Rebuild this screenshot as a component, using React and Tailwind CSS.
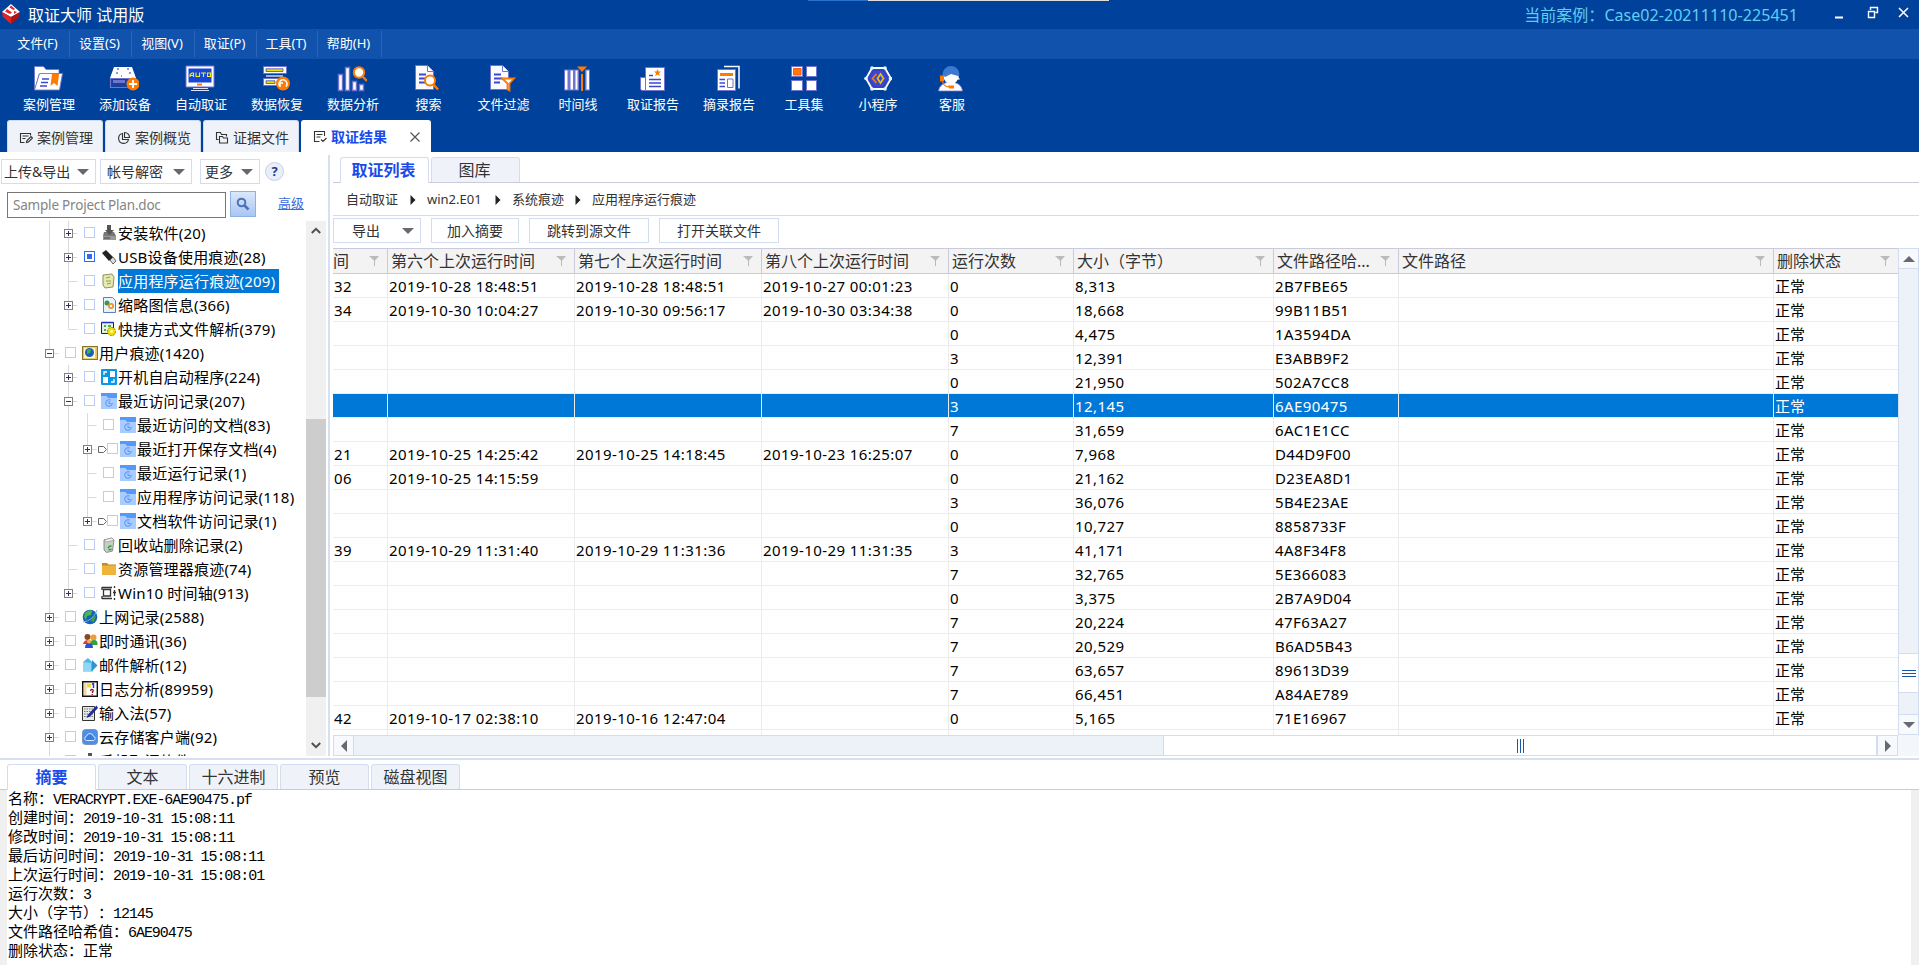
import React from "react";

const UI = "font-['Noto_Sans','Noto_Sans_CJK_SC',sans-serif]";

function Tri({ dir = "down", size = 12, color = "#666a70" }) {
  const d = { down: "M0 3h12l-6 6z", up: "M0 9h12l-6-6z", right: "M3 0v12l6-6z", left: "M9 0v12l-6-6z" }[dir];
  return (
    <svg width={size} height={size} viewBox="0 0 12 12" className="shrink-0">
      <path d={d} fill={color} />
    </svg>
  );
}

/* ---------- toolbar icons, drawn on a 30x27 grid ---------- */
const L = "#6f74cf";
const B = "#3a49cf";
const O = "#ff7a00";
const DocPage = () => (
  <>
    <path d="M3.500.5h12l6 6v18h-18z" fill="#fafaff" stroke={L} />
    <path d="M15.500.5v6h6" fill="#fff" stroke={L} />
    <path d="M7 9.500h7M7 13.500h9M7 17.500h6" stroke={B} strokeWidth="1.800" />
  </>
);
const toolIcons = {
  cases: (
    <>
      <path d="M1.500 1.500h9l2.500 3h13v5H6l-4 15h-.5z" fill="#fff" stroke={L} strokeWidth=".8" />
      <path d="M6.500 8.500h23l-3 16.500H1.500z" fill="#fff" stroke={L} strokeWidth=".9" />
      <path d="M9 14h7M8 17.500h7M7 21h7" stroke={B} strokeWidth="1.600" />
      <path d="M19 9h7l-1.500 12-3.500-3-3.500 3z" fill={O} />
    </>
  ),
  device: (
    <>
      <path d="M5 2h18l4 11H1z" fill="#fff" />
      <path d="M8 4h2M18 4h2M7 8h2M20 8h2M12 11h1" stroke={L} strokeWidth="1.600" />
      <path d="M1.500 13.500h25v9h-25z" fill="#1b3f9c" stroke={L} strokeWidth="1.200" />
      <path d="M4 15h12v3H4z" fill={L} />
      <circle cx="24" cy="19" r="6.500" fill={O} />
      <path d="M24 15v8M20 19h8" stroke="#fff" strokeWidth="1.800" />
    </>
  ),
  auto: (
    <>
      <path d="M1 1h28v21H1z" fill="#fff" stroke={L} strokeWidth="1" />
      <path d="M3.500 3.500h23v14h-23z" fill="#1746d6" />
      <path d="M5 12V9.500l2-1.500h1.500v4M5 10.500h3.500M11 7.500v4h3.500v-4M16 8h5M18.500 8v4M22.500 8h3v3.500h-3z" fill="none" stroke="#ffef00" strokeWidth="1.100" />
      <path d="M12 18.500h5v2h-5z" fill={O} />
      <path d="M8 23.500h15M6 25.500h18" stroke="#dfe3ff" strokeWidth="1" />
    </>
  ),
  recover: (
    <>
      <path d="M2.500 1.500h23v7h-23zM2.500 13.500h23v7h-23z" fill="#fff" stroke={L} />
      <path d="M5 3.800h17v2.700H5z" fill="#e8e000" stroke={B} strokeWidth=".8" />
      <path d="M5 15.800h9v2.700H5z" fill="#e8e000" stroke={B} strokeWidth=".8" />
      <path d="M5 11h17" stroke="#fff" strokeWidth="1.200" />
      <circle cx="22" cy="18.500" r="7" fill={O} />
      <path d="M19 21.500a4 4 0 1 1 6 0M19 22v-4M19 18h3" fill="none" stroke="#fff" strokeWidth="1.600" />
    </>
  ),
  analyze: (
    <>
      <path d="M1.500 9.500h4v16h-4zM8.500 2.500h4v23h-4zM15.500 16.500h4v9h-4zM22.500 19.500h4v6h-4z" fill="#fff" stroke={L} strokeWidth="1.400" />
      <path d="M25 11l5 5" stroke={O} strokeWidth="2.400" />
      <circle cx="22" cy="7.500" r="5.200" fill="#fff" stroke={O} strokeWidth="2" />
    </>
  ),
  search: (
    <>
      <DocPage />
      <path d="M21 19l5 5.500" stroke={O} strokeWidth="2.600" />
      <circle cx="18" cy="15.500" r="5" fill="#fff" stroke={O} strokeWidth="2" />
    </>
  ),
  filter: (
    <>
      <DocPage />
      <path d="M15 13.500h12l-4.500 5v7l-2-1v-6z" fill="#fff" stroke={O} strokeWidth="1.800" />
    </>
  ),
  timeline: (
    <>
      <path d="M2 4.500h26v21H2z" fill={L} />
      <path d="M3 5.500h2.500v19H3zM8.500 5.500h2.500v19H8.500zM13.500 5.500h2v19h-2zM24.500 5.500h2.500v19h-2.500z" fill="#fff" />
      <path d="M17 4h6v22h-6z" fill="#00429b" />
      <path d="M19 9h2v17h-2z" fill={O} />
      <path d="M15 1.500h10l-5 5.500z" fill={O} />
    </>
  ),
  report: (
    <>
      <path d="M3.500 12.500h6v13h-4q-2 0-2-2z" fill="#fff" stroke={L} />
      <path d="M8.500 2.500h19v23h-19z" fill="#fff" stroke={L} />
      <path d="M12 10.500h4M12 14.500h12M12 18h12M12 21.500h12" stroke={B} strokeWidth="1.700" />
      <path d="M20.500 4l1 2.500h2.500l-2 1.800.8 2.700-2.300-1.500-2.300 1.500.8-2.700-2-1.800h2.500z" fill={O} />
    </>
  ),
  excerpt: (
    <>
      <path d="M11 1.500h15v22" fill="none" stroke="#fff" strokeWidth="1.500" />
      <path d="M4.500 4.500h18v21h-18z" fill="#fff" stroke={L} />
      <path d="M7 8h13v3H7z" fill={O} />
      <path d="M6.500 14.500h5.500M6.500 18h5.500M6.500 21.500h5.500" stroke={B} strokeWidth="1.700" />
      <path d="M14.500 14h5.500v8.500h-5.500z" fill="#fff" stroke={L} />
    </>
  ),
  tools: (
    <>
      <path d="M3.500 1.500h11v10h-11zM18.500 1.500h10v10h-10zM3.500 15.500h11v10h-11zM18.500 15.500h10v10h-10z" fill="#fff" stroke={L} />
      <path d="M5.500 3.500h7.500v6.500H5.500z" fill={O} stroke="#ff5a1e" />
    </>
  ),
  mini: (
    <>
      <path d="M10 3h13l6 10.500L23 24H10L4 13.500z" fill={B} stroke="#fff" strokeWidth="1.800" />
      <path d="M12 5h9l5 8.500-5 8.500h-9l-5-8.500z" fill={B} stroke="#2a35a0" strokeWidth=".6" />
      <circle cx="10" cy="3" r="1.800" fill="#d8fbff" /><circle cx="23" cy="3" r="1.800" fill="#d8fbff" />
      <circle cx="28.500" cy="13.500" r="1.800" fill="#d8fbff" /><circle cx="4" cy="13.500" r="1.800" fill="#d8fbff" />
      <circle cx="10" cy="24" r="1.800" fill="#d8fbff" /><circle cx="23" cy="24" r="1.800" fill="#d8fbff" />
      <path d="M14.500 9l-4 4.500 4 4.500" fill="none" stroke={O} strokeWidth="1.600" />
      <path d="M18.500 9l3 4.500-3 4.500-3-4.500z" fill="none" stroke="#f5c400" strokeWidth="1.600" />
    </>
  ),
  service: (
    <>
      <path d="M2.500 26c1-6 5-7.500 8-8.500h8c4 1 7 3 8 8.500z" fill="#fff" stroke={L} strokeWidth=".8" />
      <circle cx="15" cy="11.500" r="7.500" fill="#fff" />
      <path d="M6.500 9.500a8.500 8.500 0 0 1 17 0l-1.500 1.500-7-2-6 3z" fill="#3b7ad0" />
      <path d="M22 11.500l2 3h-3z" fill="#fff" />
      <path d="M4 10.500h4v6H4z" fill={O} />
      <path d="M6.500 16.500q1 5 6.500 5.500" fill="none" stroke={O} strokeWidth="1.200" />
      <path d="M12 20.500h6v3h-5z" fill={O} />
    </>
  ),
};

const tools = [
  ["cases", "案例管理", "w-[76px]"],
  ["device", "添加设备", "w-[76px]"],
  ["auto", "自动取证", "w-[76px]"],
  ["recover", "数据恢复", "w-[76px]"],
  ["analyze", "数据分析", "w-[76px]"],
  ["search", "搜索", "w-[75px]"],
  ["filter", "文件过滤", "w-[75px]"],
  ["timeline", "时间线", "w-[74px]"],
  ["report", "取证报告", "w-[76px]"],
  ["excerpt", "摘录报告", "w-[76px]"],
  ["tools", "工具集", "w-[74px]"],
  ["mini", "小程序", "w-[74px]"],
  ["service", "客服", "w-[74px]"],
];

const menus = [
  ["文件(F)", "w-[62px]"],
  ["设置(S)", "w-[62px]"],
  ["视图(V)", "w-[63px]"],
  ["取证(P)", "w-[62px]"],
  ["工具(T)", "w-[61px]"],
  ["帮助(H)", "w-[64px]"],
];

const tabIcons = {
  edit: "M11.500 4.500v-2h-10v9h4M3.500 5h6M3.500 7.500h3M7.500 11.500l.5-2 4-4 1.500 1.500-4 4z",
  pie: "M5.500 2.500a5 5 0 1 0 6 6h-6zM7.500 1.500v5h5a5 5 0 0 0-5-5z",
  folder: "M3.500 8.500h-2v-7h4l1 2h5v2M4.500 5.500h3l1 1.500h4v5h-8z",
  result: "M11.500 6v-4.500h-10v10h5M3.500 4.500h6M3.500 7h4M8 9.500l2 2 3.500-3.500",
};

function DocTab({ icon, label, active, cls }) {
  return (
    <div className={`flex h-[32px] items-center rounded-t-[3px] border-x border-t pl-[11px] ${cls} ${active ? "border-white bg-white" : "border-[#cfdcee] bg-[#eff3f9] pt-[2px]"}`}>
      <svg width="14" height="14" viewBox="0 0 14 14" fill="none" stroke="#333" strokeWidth="1.100">
        <path d={tabIcons[icon]} />
      </svg>
      <span className={`ml-[4px] text-[14px] leading-[20px] ${active ? "font-bold text-[#1a4be8]" : "text-[#333]"}`}>{label}</span>
      {active && (
        <svg width="10" height="10" viewBox="0 0 10 10" className="ml-[23px]" stroke="#555" strokeWidth="1.200">
          <path d="M.5.5l9 9M9.500.5l-9 9" />
        </svg>
      )}
    </div>
  );
}

/* ---------- tree icons, drawn on a 16x16 grid ---------- */
const treeIcons = {
  install: (
    <>
      <path d="M3 7h10l2 4v4H2v-4z" fill="#777" /><path d="M2 11h13v4H2z" fill="#999" /><path d="M3 13h6" stroke="#444" />
      <path d="M6 0h4v5h3l-4.500 5L4 5h2z" fill="#555" />
    </>
  ),
  usb: (
    <>
      <path d="M1 4l4-3 7 7-4 4z" fill="#222" /><path d="M9 11l3-3 3 4-3 3z" fill="#ddd" stroke="#444" strokeWidth=".8" />
    </>
  ),
  app: (
    <>
      <path d="M2 2l9-1 2 3-1 10-8 1-2-3z" fill="#e4eab0" stroke="#777a40" strokeWidth=".8" />
      <path d="M5 5l4-1M5 8h5M6 11l4-1" stroke="#8fa050" />
    </>
  ),
  thumb: (
    <>
      <path d="M2.500.5h9l3 3v12h-12z" fill="#e8f1ff" stroke="#5b7fc0" /><circle cx="6" cy="6" r="2.500" fill="#3c9a3c" /><circle cx="10" cy="9" r="3" fill="#e8962a" /><circle cx="10" cy="9" r="1.200" fill="#fff" />
    </>
  ),
  shortcut: (
    <>
      <path d="M.5 1.500h12v11H.5z" fill="#e7f2e7" stroke="#223" /><path d="M.5 1.500h12" stroke="#2233bb" strokeWidth="1.500" /><path d="M3 5h2M3 9h2M7 5h3" stroke="#179a17" strokeWidth="1.500" />
      <circle cx="10.500" cy="10.500" r="4" fill="#f5e100" stroke="#8c7a00" strokeDasharray="2 1" /><circle cx="10.500" cy="10.500" r="1.300" fill="#fff" />
    </>
  ),
  user: (
    <>
      <path d="M.5 1.500h15v13H.5z" fill="#e8cf70" stroke="#8f7420" strokeWidth="1.200" /><path d="M2 3h11v10H2z" fill="#fff7c8" />
      <circle cx="7.500" cy="7.500" r="4.500" fill="#1c5fb8" /><path d="M5 5q3-2 4 0l-1 3-3 1z" fill="#43b04a" />
    </>
  ),
  boot: (
    <>
      <rect width="16" height="16" rx="1" fill="#0a97e6" /><path d="M2 8h5v6H2zM9 2h5v6H9z" fill="#fff" /><path d="M3 6V3h3M13 10v3h-3" fill="none" stroke="#fff" strokeWidth="1.300" />
    </>
  ),
  recent: (
    <>
      <path d="M0 0h16v16H0z" fill="#a9ccff" /><path d="M0 0h16v5H7L5.500 3H0z" fill="#5598fb" /><circle cx="8" cy="10" r="3.300" fill="none" stroke="#5595f0" strokeDasharray="17 3" /><path d="M8 8v2.500h2" fill="none" stroke="#5595f0" />
    </>
  ),
  bin: (
    <>
      <path d="M3 3l8-2 2 2-1.500 11-6 1.500L3 13z" fill="#c4cfc4" stroke="#777" strokeWidth=".8" /><path d="M3 3l8-2 2 2-7 2z" fill="#f5f5ee" stroke="#888" strokeWidth=".6" /><path d="M7 11q2-3 3.500-1.500M7.500 12.500h3" fill="none" stroke="#2e9a2e" strokeWidth="1.400" />
    </>
  ),
  folder: (
    <>
      <path d="M1 2h5l1.500 1.500H15V14H1z" fill="#c98a1e" /><path d="M1 4.500h14V14H1z" fill="#efb43c" />
    </>
  ),
  axis: <path d="M1 2.500h10M1 13.500h10M2.500 4.500h7v6.500h-7zM1 2v3M1 11v3M13.500 1v2M13.500 5v6M13.500 13v2M12 7.500h3" fill="none" stroke="#333" strokeWidth="1.300" />,
  globe: (
    <>
      <circle cx="8" cy="8" r="7.300" fill="#1763b5" /><path d="M3 4q4-4 7-2l-1 4-4 1-1 4-2-3z" fill="#4cb84c" /><path d="M10 8l4-1-2 6-3-1z" fill="#3da04a" /><path d="M1 13Q11 12 15 1" fill="none" stroke="#6ab6f0" />
    </>
  ),
  im: (
    <>
      <circle cx="5.500" cy="4" r="3" fill="#8a4a20" /><circle cx="11.500" cy="4.500" r="3" fill="#f59a30" /><path d="M1 11q1-4 5-4t5 4z" fill="#d8432a" /><path d="M7 12q1-5 5-5t3.500 5z" fill="#3aa03a" /><path d="M3 15q0-5 4-5t4 5z" fill="#2a50d8" /><circle cx="7" cy="8.500" r="2" fill="#f0b060" />
    </>
  ),
  mail: (
    <>
      <path d="M1 5l5-4 4 4h1l4 3.500-4 4v2H1z" fill="#4fb8e8" /><path d="M1 5l8 1v8H1z" fill="#8ed8f5" /><path d="M10 3l5.500 5.500L10 14z" fill="#2f93cc" />
    </>
  ),
  log: (
    <>
      <path d="M.7.7h14.600v14.600H.7z" fill="#fff" stroke="#111" strokeWidth="1.400" /><path d="M2 2h2.500v12H2z" fill="#e8dca0" /><path d="M6 2.500v4M8 2.500v4" stroke="#e0d000" strokeWidth="1.500" /><path d="M11.500 2v5M10 3.500l1.500-1.500" stroke="#2233dd" strokeWidth="1.400" /><path d="M8.500 10q.5-2 2-1.500t0 2.500v1M10.200 13v1" fill="none" stroke="#8a1020" strokeWidth="1.300" />
    </>
  ),
  ime: (
    <>
      <path d="M.5 1.500h12v14H.5z" fill="#e8e8e8" stroke="#333" /><path d="M2 4h9M2 6.500h9M2 9h9M2 11.500h9" stroke="#777" strokeDasharray="1.500 1" /><path d="M14.500.5L6 9.500 4.500 13 8 11.500 16 3z" fill="#1d2f9c" />
    </>
  ),
  cloud: (
    <>
      <rect x=".5" y=".5" width="15" height="15" rx="3" fill="#4d8fe8" stroke="#7a93bd" /><path d="M4.500 11.500a2.200 2.200 0 0 1 0-4.300 3.500 3.500 0 0 1 6.800 0 2.200 2.200 0 0 1 .2 4.300z" fill="#3a7be0" stroke="#dceaff" />
    </>
  ),
};

/* [level, expander, icon, label, options] */
const tree = [
  ["B", "+", "install", "安装软件(20)"],
  ["B", "+", "usb", "USB设备使用痕迹(28)", { partial: true }],
  ["B", "", "app", "应用程序运行痕迹(209)", { selected: true }],
  ["B", "+", "thumb", "缩略图信息(366)"],
  ["B", "", "shortcut", "快捷方式文件解析(379)", { last: true }],
  ["A", "-", "user", "用户痕迹(1420)"],
  ["B", "+", "boot", "开机自启动程序(224)"],
  ["B", "-", "recent", "最近访问记录(207)"],
  ["C", "", "recent", "最近访问的文档(83)"],
  ["C", "+", "recent", "最近打开保存文档(4)", { flag: true }],
  ["C", "", "recent", "最近运行记录(1)"],
  ["C", "", "recent", "应用程序访问记录(118)"],
  ["C", "+", "recent", "文档软件访问记录(1)", { flag: true, last: true }],
  ["B", "", "bin", "回收站删除记录(2)"],
  ["B", "", "folder", "资源管理器痕迹(74)"],
  ["B", "+", "axis", "Win10 时间轴(913)", { last: true }],
  ["A", "+", "globe", "上网记录(2588)"],
  ["A", "+", "im", "即时通讯(36)"],
  ["A", "+", "mail", "邮件解析(12)"],
  ["A", "+", "log", "日志分析(89959)"],
  ["A", "+", "ime", "输入法(57)"],
  ["A", "+", "cloud", "云存储客户端(92)"],
  ["A", "+", "install", "手机取证软件(2)"],
];

function Guide({ kind, exp, last }) {
  return (
    <svg width="19" height="24" viewBox="0 0 19 24" className="shrink-0" fill="none">
      <path d={last ? "M9.500 0v12.500" : "M9.500 0v24"} stroke="#dadada" />
      {kind === "node" && <path d="M9.500 12.500h9" stroke="#dadada" />}
      {exp && (
        <>
          <rect x="5.500" y="8.500" width="8" height="8" fill="#fff" stroke="#808080" />
          <path d={exp === "+" ? "M7 12.500h5M9.500 10v5" : "M7 12.500h5"} stroke="#26346b" />
        </>
      )}
    </svg>
  );
}

function TreeRow({ row }) {
  const [level, exp, icon, label, o = {}] = row;
  return (
    <div className="flex h-[24px] shrink-0 items-center pl-[40px]">
      {level !== "A" && <Guide kind="line" />}
      {level === "C" && <Guide kind="line" />}
      <Guide kind="node" exp={exp} last={o.last} />
      {o.flag ? (
        <svg width="9" height="9" viewBox="0 0 9 9" className="ml-[1px] shrink-0" fill="none" stroke="#666"><path d="M.5 1.500h5l3 3-3 3h-5z" /></svg>
      ) : (
        <span className="w-[6px] shrink-0" />
      )}
      <span className={`mt-[-1px] flex size-[11px] shrink-0 items-center justify-center border ${o.partial ? "border-[#2f6bea] bg-white" : "border-[#b9cdf5] bg-white"}`}>
        {o.partial && <span className="size-[5px] bg-[#2f6bea]" />}
      </span>
      <svg width="16" height="16" viewBox="0 0 16 16" className={`mt-[-1px] shrink-0 ${o.flag ? "ml-[2px]" : "ml-[6px]"}`}>{treeIcons[icon]}</svg>
      <span className={`ml-[1px] h-[24px] whitespace-nowrap pr-[4px] text-[15px] leading-[24px] tracking-[0.2px] ${o.selected ? "bg-[#0078d7] text-white" : "text-black"}`}>{label}</span>
    </div>
  );
}

/* ---------- results table ---------- */
const cols = [
  ["间", "w-[55px]"],
  ["第六个上次运行时间", "w-[187px]"],
  ["第七个上次运行时间", "w-[187px]"],
  ["第八个上次运行时间", "w-[187px]"],
  ["运行次数", "w-[125px]"],
  ["大小（字节）", "w-[200px]"],
  ["文件路径哈...", "w-[125px]"],
  ["文件路径", "w-[375px]"],
  ["删除状态", "w-[124px]"],
];
const rows = [
  ["32", "2019-10-28 18:48:51", "2019-10-28 18:48:51", "2019-10-27 00:01:23", "0", "8,313", "2B7FBE65"],
  ["34", "2019-10-30 10:04:27", "2019-10-30 09:56:17", "2019-10-30 03:34:38", "0", "18,668", "99B11B51"],
  ["", "", "", "", "0", "4,475", "1A3594DA"],
  ["", "", "", "", "3", "12,391", "E3ABB9F2"],
  ["", "", "", "", "0", "21,950", "502A7CC8"],
  ["", "", "", "", "3", "12,145", "6AE90475"],
  ["", "", "", "", "7", "31,659", "6AC1E1CC"],
  ["21", "2019-10-25 14:25:42", "2019-10-25 14:18:45", "2019-10-23 16:25:07", "0", "7,968", "D44D9F00"],
  ["06", "2019-10-25 14:15:59", "", "", "0", "21,162", "D23EA8D1"],
  ["", "", "", "", "3", "36,076", "5B4E23AE"],
  ["", "", "", "", "0", "10,727", "8858733F"],
  ["39", "2019-10-29 11:31:40", "2019-10-29 11:31:36", "2019-10-29 11:31:35", "3", "41,171", "4A8F34F8"],
  ["", "", "", "", "7", "32,765", "5E366083"],
  ["", "", "", "", "0", "3,375", "2B7A9D04"],
  ["", "", "", "", "7", "20,224", "47F63A27"],
  ["", "", "", "", "7", "20,529", "B6AD5B43"],
  ["", "", "", "", "7", "63,657", "89613D39"],
  ["", "", "", "", "7", "66,451", "A84AE789"],
  ["42", "2019-10-17 02:38:10", "2019-10-16 12:47:04", "", "0", "5,165", "71E16967"],
];

function Table() {
  return (
    <div className="flex h-[487px] w-[1565px] flex-col overflow-hidden">
      <div className="flex h-[26px] shrink-0 border-y border-[#c9cadb] bg-[#f3f3f3]">
        {cols.map(([name, w], i) => (
          <div key={i} className={`flex shrink-0 items-center justify-between overflow-hidden pr-[8px] ${w} ${i === 8 ? "" : "border-r border-[#c9cadb]"} ${i === 0 ? "" : "pl-[3px]"}`}>
            <span className="whitespace-nowrap text-[16px] leading-[24px] text-[#333]">{name}</span>
            <svg width="10" height="10" viewBox="0 0 10 10" className="mt-[-1px] shrink-0"><path d="M0 0h10L6 4.500V10H5V4.500z" fill="#bbb" /></svg>
          </div>
        ))}
      </div>
      {[...rows, null].map((r, ri) => {
        const sel = ri === 5;
        return (
          <div key={ri} className={`flex h-[24px] shrink-0 border-b border-[#ececec] ${sel ? "bg-[#0078d7] text-white" : "bg-white text-black"}`}>
            {cols.map(([, w], i) => (
              <div key={i} className={`shrink-0 whitespace-nowrap text-[15px] leading-[24px] ${i < 8 ? "tracking-[0.42px]" : ""} ${w} ${i === 8 ? "" : "border-r border-[#ececec]"} pl-[1px]`}>
                {r ? (i < 7 ? r[i] : i === 8 ? "正常" : "") : ""}
              </div>
            ))}
          </div>
        );
      })}
    </div>
  );
}

const Btn = ({ cls, children }) => (
  <div className={`flex items-center border border-[#d3ddef] bg-white text-[14px] leading-[20px] text-[#333] ${cls}`}>{children}</div>
);

const summary = [
  ["名称：", "VERACRYPT.EXE-6AE90475.pf"],
  ["创建时间：", "2019-10-31 15:08:11"],
  ["修改时间：", "2019-10-31 15:08:11"],
  ["最后访问时间：", "2019-10-31 15:08:11"],
  ["上次运行时间：", "2019-10-31 15:08:01"],
  ["运行次数：", "3"],
  ["大小（字节）：", "12145"],
  ["文件路径哈希值：", "6AE90475"],
  ["删除状态：", "正常"],
];

export default function App() {
  return (
    <div className={`flex h-[965px] w-[1919px] flex-col overflow-hidden bg-white [text-spacing-trim:space-all] ${UI}`}>
      {/* title bar */}
      <header className="relative flex h-[29px] shrink-0 items-center bg-[#00429b]">
        <div className="absolute left-[808px] top-0 flex h-[1px]">
          <div className="w-[60px] bg-[#2a72cf]" />
          <div className="w-[241px] bg-[#dcdcdc]" />
        </div>
        <svg width="18" height="20" viewBox="0 0 18 20" className="ml-[2px] mt-[-2px]">
          <path d="M9 0l9 8-9 5-9-5z" fill="#fff" />
          <path d="M0 8l9 5v7l-8-7z" fill="#e52222" />
          <path d="M18 8l-9 5v7l8-7z" fill="#b01414" />
          <path d="M9 1.500l4 3.500-1.500 1-4-2.500zM5 5l5 3.500-2 1.500-5-2.500zM12 7l3 1-3 2z" fill="#e52222" />
        </svg>
        <span className="ml-[8px] text-[16px] leading-[24px] text-white">取证大师 试用版</span>
        <span className="ml-auto mr-[35px] text-[16px] leading-[24px] tracking-[0.05px] text-[#5fcdf2]">当前案例：Case02-20211110-225451</span>
        <svg width="76" height="14" viewBox="0 0 76 14" className="mr-[10px] mt-[-3px]" fill="none" stroke="#fff">
          <path d="M2 11.500h8" strokeWidth="2" />
          <path d="M37.500 4v-2.500h7v5h-2M35.500 5.500h6v6h-6z" strokeWidth="1.400" />
          <path d="M66 2l9 9M75 2l-9 9" strokeWidth="1.500" />
        </svg>
      </header>

      {/* menu bar */}
      <nav className="flex h-[30px] shrink-0 items-center bg-[#1152ad] pl-[8px]">
        {menus.map(([m, w]) => (
          <div key={m} className={`flex h-[26px] items-center justify-center border-r border-[#2c67ba] pr-[2px] text-[13px] text-white ${w}`}>{m}</div>
        ))}
      </nav>

      {/* toolbar and document tabs */}
      <div className="flex h-[93px] shrink-0 flex-col bg-[#00429b]">
        <div className="flex h-[61px] pl-[11px] pt-[6px]">
          {tools.map(([k, label, w]) => (
            <div key={k} className={`flex shrink-0 flex-col items-center ${w}`}>
              <svg width="30" height="27" viewBox="0 0 30 27" fill="none" className="mr-[3px]">{toolIcons[k]}</svg>
              <span className="mt-[2px] text-[13px] leading-[20px] text-white">{label}</span>
            </div>
          ))}
        </div>
        <div className="flex gap-[2px] pl-[7px]">
          <DocTab icon="edit" label="案例管理" cls="w-[96px]" />
          <DocTab icon="pie" label="案例概览" cls="w-[96px]" />
          <DocTab icon="folder" label="证据文件" cls="w-[96px]" />
          <DocTab icon="result" label="取证结果" cls="w-[130px]" active />
        </div>
      </div>

      {/* middle area */}
      <div className="flex h-[606px] shrink-0">
        <aside className="flex w-[328px] shrink-0 flex-col">
          <div className="flex h-[69px] shrink-0 flex-col">
            <div className="flex pl-[1px] pt-[7px]">
              <Btn cls="h-[25px] w-[95px] justify-between pl-[2px] pr-[6px]"><span>上传&amp;导出</span><Tri /></Btn>
              <Btn cls="ml-[4px] h-[25px] w-[92px] justify-between pl-[6px] pr-[6px]"><span>帐号解密</span><Tri /></Btn>
              <Btn cls="ml-[8px] h-[25px] w-[60px] justify-between pl-[4px] pr-[6px]"><span>更多</span><Tri /></Btn>
              <div className="ml-[5px] mt-[3px] flex size-[19px] items-center justify-center rounded-full border border-[#c3d2e8] bg-[#e9eff8] text-[13px] font-bold leading-none text-[#1d3d85]">?</div>
            </div>
            <div className="flex pl-[7px] pt-[7px]">
              <div className="mt-[1px] flex h-[26px] w-[219px] items-center border border-[#777] pl-[5px] text-[13.500px] text-[#858585]">
                <span className="tracking-[-0.2px]">Sample Project Plan.doc</span>
              </div>
              <div className="ml-[4px] flex size-[26px] items-center justify-center border border-[#8fb0e0] bg-gradient-to-b from-[#dbe8fb] to-[#a9c6f2]">
                <svg width="14" height="14" viewBox="0 0 14 14" fill="none" stroke="#4a74ba" strokeWidth="2"><circle cx="5.500" cy="5.500" r="3.800" /><path d="M8.500 8.500l4 4" strokeWidth="2.600" /></svg>
              </div>
              <span className="ml-[22px] mt-[2px] text-[13px] leading-[20px] text-[#3a6bdc] underline">高级</span>
            </div>
          </div>
          <div className="flex h-[535px]">
            <div className="flex w-[306px] flex-col overflow-hidden">
              {tree.map((r, i) => <TreeRow key={i} row={r} />)}
            </div>
            <div className="flex w-[20px] flex-col items-center justify-between bg-[#f0f0f0] pb-[6px] pt-[5px]">
              <svg width="10" height="10" viewBox="0 0 10 10" fill="none" stroke="#505050" strokeWidth="2"><path d="M.8 7L5 2.800 9.200 7" /></svg>
              <div className="mb-[43px] mt-auto h-[278px] w-[20px] bg-[#cdcdcd]" />
              <svg width="10" height="10" viewBox="0 0 10 10" fill="none" stroke="#505050" strokeWidth="2"><path d="M.8 3L5 7.200 9.200 3" /></svg>
            </div>
          </div>
        </aside>

        <div className="mb-[2px] mt-[3px] w-[2px] shrink-0 bg-[#d6e0f0]" />

        <main className="flex grow flex-col pl-[3px]">
          <div className="flex h-[31px] shrink-0 items-end border-b border-[#c9cadb] pl-[7px]">
            <div className="mb-[-1px] flex h-[26px] w-[89px] items-center justify-center rounded-t-[3px] border-x border-t border-[#d3ddef] bg-white pb-[2px] pr-[2px] text-[16px] font-bold text-[#1a4be8]">取证列表</div>
            <div className="ml-[2px] flex h-[25px] w-[89px] items-center justify-center rounded-t-[3px] border-x border-t border-[#d3ddef] bg-[#eff3f9] pr-[2px] text-[16px] text-[#333]">图库</div>
          </div>
          <div className="flex h-[33px] shrink-0 items-center border-b border-[#d3ddef] pl-[13px] pt-[1px] text-[13px] text-[#333]">
            <span>自动取证</span>
            <span className="ml-[10px] mr-[9px]"><Tri dir="right" color="#222" size={10} /></span>
            <span className="w-[56px]">win2.E01</span>
            <span className="ml-[10px] mr-[9px]"><Tri dir="right" color="#222" size={10} /></span>
            <span>系统痕迹</span>
            <span className="ml-[9px] mr-[9px]"><Tri dir="right" color="#222" size={10} /></span>
            <span>应用程序运行痕迹</span>
          </div>
          <div className="flex h-[32px] shrink-0 gap-[10px] pt-[2px]">
            <Btn cls="h-[25px] w-[88px] justify-between pl-[18px] pr-[6px]"><span>导出</span><Tri /></Btn>
            <Btn cls="h-[25px] w-[88px] justify-center">加入摘要</Btn>
            <Btn cls="h-[25px] w-[120px] justify-center">跳转到源文件</Btn>
            <Btn cls="h-[25px] w-[120px] justify-center">打开关联文件</Btn>
          </div>
          <div className="flex h-[487px] shrink-0">
            <Table />
            <div className="flex w-[21px] flex-col border-x border-[#d3ddef] bg-[#edf1f8]">
              <div className="flex h-[21px] items-center justify-center border-y border-[#d3ddef] bg-[#f7f9fd]"><Tri dir="up" /></div>
              <div className="mt-auto flex h-[40px] flex-col items-center justify-center gap-[2px] border-y border-[#d3ddef] bg-white">
                <div className="h-[1px] w-[14px] bg-[#1b57a8]" /><div className="h-[1px] w-[14px] bg-[#1b57a8]" /><div className="h-[1px] w-[14px] bg-[#1b57a8]" />
              </div>
              <div className="mt-[21px] flex h-[21px] items-center justify-center border-y border-[#d3ddef] bg-[#f7f9fd]"><Tri /></div>
            </div>
          </div>
          <div className="flex h-[21px] shrink-0">
            <div className="flex w-[21px] items-center justify-center border border-[#d3ddef] bg-[#f7f9fd]"><Tri dir="left" /></div>
            <div className="w-[809px] border-y border-[#d3ddef] bg-[#edf1f8]" />
            <div className="flex w-[714px] items-center justify-center gap-[2px] border border-[#d3ddef] bg-white">
              <div className="h-[14px] w-[1px] bg-[#1b57a8]" /><div className="h-[14px] w-[1px] bg-[#1b57a8]" /><div className="h-[14px] w-[1px] bg-[#1b57a8]" />
            </div>
            <div className="flex w-[21px] items-center justify-center border border-[#d3ddef] bg-[#f7f9fd]"><Tri dir="right" /></div>
            <div className="w-[21px] bg-[#f3f6fb]" />
          </div>
        </main>
      </div>

      {/* details */}
      <div className="h-[2px] shrink-0 bg-[#d6e0f0]" />
      <div className="flex h-[30px] shrink-0 items-end gap-[2px] border-b border-[#c9cadb] pl-[7px]">
        {["摘要", "文本", "十六进制", "预览", "磁盘视图"].map((t, i) => (
          <div key={t} className={`flex w-[89px] items-center justify-center rounded-t-[3px] border-x border-t border-[#d3ddef] text-[16px] leading-[20px] ${i === 0 ? "mb-[-1px] h-[26px] bg-white pb-[2px] font-bold text-[#1a4be8]" : "h-[25px] bg-[#eff3f9] text-[#333]"}`}>{t}</div>
        ))}
      </div>
      <div className="flex grow">
        <div className="w-[7px] bg-[#f0f0f0]" />
        <div className="grow pl-[1px] pt-[1px] font-['Liberation_Mono','Noto_Sans_CJK_SC',monospace] text-black">
          {summary.map(([k, v]) => (
            <div key={k} className="flex h-[19px] items-center whitespace-pre text-[15px] leading-[19px]">
              <span>{k}</span>
              <span className={v === "正常" ? "" : "tracking-[-1.050px]"}>{v}</span>
            </div>
          ))}
        </div>
        <div className="w-[8px] bg-[#f0f0f0]" />
      </div>
    </div>
  );
}
